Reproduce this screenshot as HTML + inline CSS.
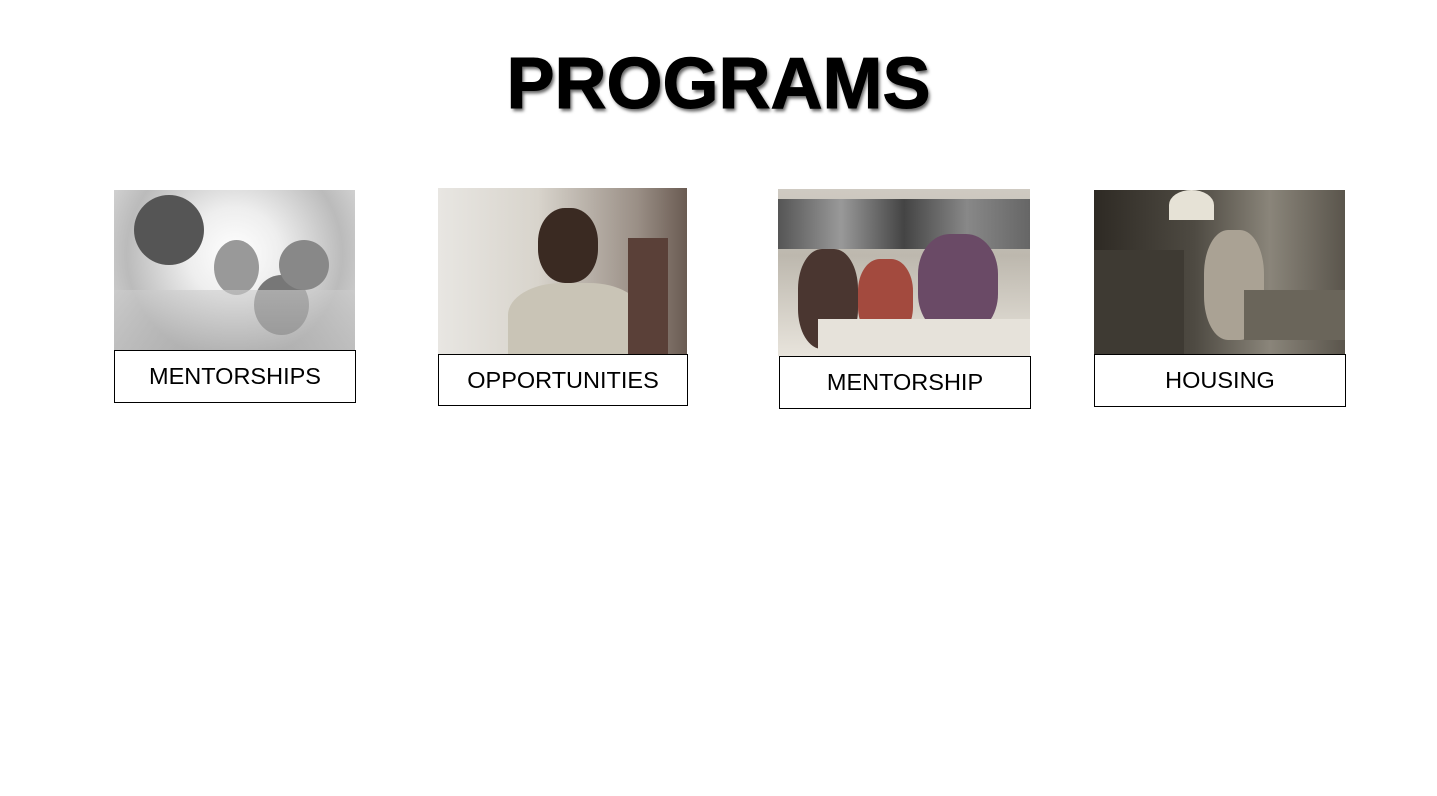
<!DOCTYPE html>
<html><head><style>
body{margin:0;width:1437px;height:796px;background:#fff;position:relative;overflow:hidden;font-family:"Liberation Sans",sans-serif}
.t{position:absolute;left:0;width:1437px;top:43px;text-align:center;font-weight:bold;font-size:72px;color:#000;text-shadow:2px 3px 3px #666, -1px -1px 0 #fff;-webkit-text-stroke:1px #000}
.i{position:absolute;overflow:hidden}
.l{position:absolute;border:1px solid #000;box-sizing:border-box;background:#fff;text-align:center;font-size:23.5px;color:#000}
</style></head><body>
<div class="t">PROGRAMS</div>

<div class="i" style="left:114px;top:190px;width:241px;height:160px;background:radial-gradient(circle at 50% 40%,#fff 0,#eee 30%,#bbb 70%,#ddd 100%)">
<div style="position:absolute;left:20px;top:5px;width:70px;height:70px;border-radius:50%;background:#555"></div>
<div style="position:absolute;left:100px;top:50px;width:45px;height:55px;border-radius:50%;background:#999"></div>
<div style="position:absolute;left:140px;top:85px;width:55px;height:60px;border-radius:50%;background:#777"></div>
<div style="position:absolute;left:165px;top:50px;width:50px;height:50px;border-radius:50%;background:#888"></div>
<div style="position:absolute;left:0;top:100px;width:241px;height:60px;background:linear-gradient(#ccc,#aaa);opacity:.6"></div>
</div>
<div class="l" style="left:114px;top:350px;width:242px;height:53px;line-height:50px">MENTORSHIPS</div>

<div class="i" style="left:438px;top:188px;width:249px;height:166px;background:linear-gradient(90deg,#e8e6e2 0,#d8d4cc 40%,#9a8f86 80%,#6a5b52 100%)">
<div style="position:absolute;left:100px;top:20px;width:60px;height:75px;border-radius:45%;background:#3a2a22"></div>
<div style="position:absolute;left:70px;top:95px;width:135px;height:80px;border-radius:40% 40% 0 0;background:#c9c4b6"></div>
<div style="position:absolute;left:190px;top:50px;width:40px;height:116px;background:#5a4038"></div>
</div>
<div class="l" style="left:438px;top:354px;width:250px;height:52px;line-height:50px">OPPORTUNITIES</div>

<div class="i" style="left:778px;top:189px;width:252px;height:167px;background:linear-gradient(#cfcac2 0,#bdb8ae 40%,#e8e4dc 100%)">
<div style="position:absolute;left:0;top:10px;width:252px;height:50px;background:linear-gradient(90deg,#555,#999,#444,#888,#666)"></div>
<div style="position:absolute;left:20px;top:60px;width:60px;height:100px;border-radius:40%;background:#4a3630"></div>
<div style="position:absolute;left:80px;top:70px;width:55px;height:80px;border-radius:40%;background:#a34a3e"></div>
<div style="position:absolute;left:140px;top:45px;width:80px;height:100px;border-radius:40%;background:#6a4a66"></div>
<div style="position:absolute;left:40px;top:130px;width:212px;height:37px;background:#e6e2da"></div>
</div>
<div class="l" style="left:779px;top:356px;width:252px;height:53px;line-height:50px">MENTORSHIP</div>

<div class="i" style="left:1094px;top:190px;width:251px;height:164px;background:linear-gradient(90deg,#2e2a24 0,#4e4a42 40%,#8a857a 70%,#5a554c 100%)">
<div style="position:absolute;left:75px;top:0;width:45px;height:30px;background:#e6e2d6;border-radius:50% 50% 0 0"></div>
<div style="position:absolute;left:110px;top:40px;width:60px;height:110px;border-radius:40%;background:#aaa294"></div>
<div style="position:absolute;left:0;top:60px;width:90px;height:104px;background:#3e3a33"></div>
<div style="position:absolute;left:150px;top:100px;width:101px;height:50px;background:#6a655a"></div>
</div>
<div class="l" style="left:1094px;top:354px;width:252px;height:53px;line-height:50px">HOUSING</div>
</body></html>
